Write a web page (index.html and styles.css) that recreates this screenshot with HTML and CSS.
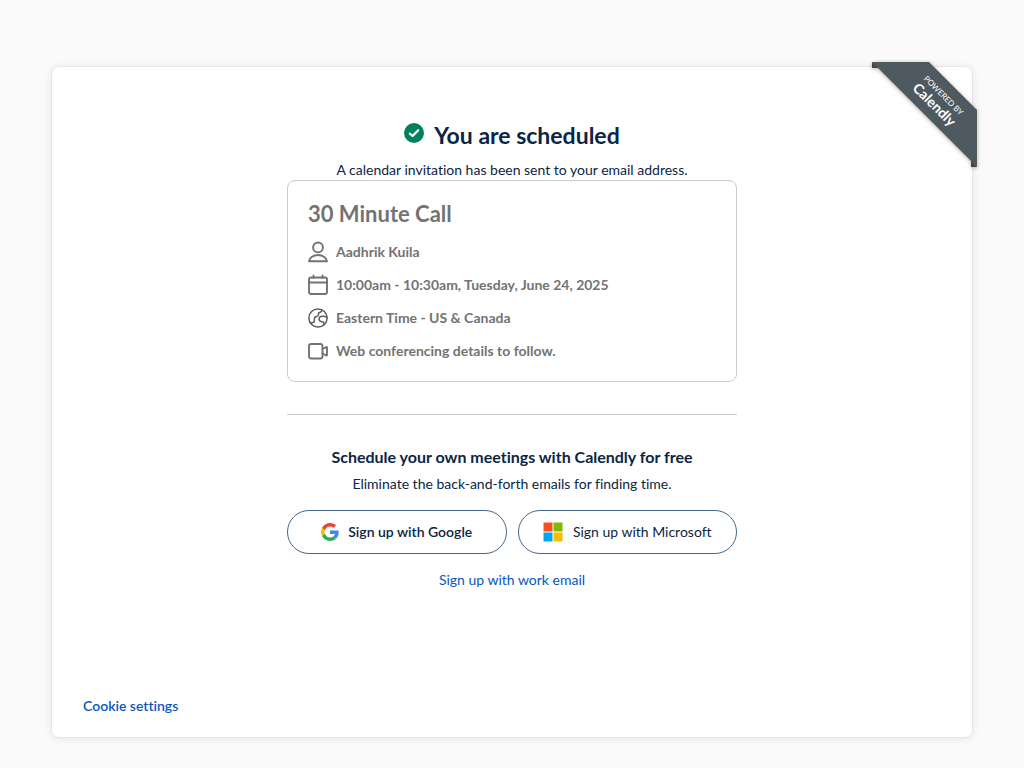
FILE: index.html
```html
<!DOCTYPE html>
<html lang="en">
<head>
<meta charset="utf-8">
<meta name="viewport" content="width=device-width, initial-scale=1">
<title>You are scheduled</title>
<link rel="stylesheet" href="styles.css">
</head>
<body>
<main class="card">
  <a class="ribbon" href="#">
    <svg class="ribbon-shape" viewBox="0 0 105 105" aria-hidden="true">
      <path class="ribbon-fold" d="M0 0V6H8ZM105 105H99V97Z"/>
      <path class="ribbon-band" d="M0 0H57L105 48V105Z"/>
    </svg>
    <span class="ribbon-text"><span class="ribbon-small">POWERED BY</span><span class="ribbon-name">Calendly</span></span>
  </a>

  <div class="content">
    <h1 class="title">
      <svg class="check" viewBox="0 0 20 20" aria-hidden="true"><circle cx="10" cy="10" r="10" fill="#00805f"/><path d="M5.8 10.6 8.6 13 14.2 7.2" fill="none" stroke="#fff" stroke-width="2.2" stroke-linecap="round" stroke-linejoin="round"/></svg>
      <span>You are scheduled</span>
    </h1>
    <p class="text">A calendar invitation has been sent to your email address.</p>

    <section class="event">
      <h2 class="event-title">30 Minute Call</h2>
      <ul class="details">
        <li class="detail">
          <svg class="icon" viewBox="0 0 20 20" aria-hidden="true"><circle cx="10" cy="5.4" r="4.9"/><path d="M1 19.2C1.6 15.6 5.4 13 10 13s8.400 2.600 9 6.200Z"/></svg>
          <span>Aadhrik Kuila</span>
        </li>
        <li class="detail">
          <svg class="icon" viewBox="0 0 20 20" aria-hidden="true"><rect x="1" y="2.500" width="18" height="16.500" rx="2"/><path d="M1 7.500H19M5.500 .5V3M14.500 .5V3"/></svg>
          <span>10:00am - 10:30am, Tuesday, June 24, 2025</span>
        </li>
        <li class="detail">
          <svg class="icon globe" viewBox="0 0 20 20" aria-hidden="true"><circle cx="10" cy="10" r="9.100"/><path d="M2 14.700H4.300C5.600 14.700 6.400 13.800 6.400 12.600V10.800C6.400 9.500 7.300 8.600 8.600 8.500 9.800 8.400 10.500 7.600 10.400 6.500 10.300 5.300 11 4.500 12.100 4.300 13.200 4 13.900 3.200 13.900 1.900M19 9.200C17.800 8.500 16.500 8.200 15 8.200H14.300C12.500 8.200 11.100 9.400 11.100 11.100S12.500 13.800 14.200 13.800C15.300 13.800 15.800 14.400 15.800 15.400V16.900"/></svg>
          <span>Eastern Time - US &amp; Canada</span>
        </li>
        <li class="detail">
          <svg class="icon" viewBox="0 0 20 20" aria-hidden="true"><rect x="1" y="3" width="13.500" height="14.500" rx="2"/><path d="M14.500 8 18.200 6.100Q19 5.800 19 6.700V13.800Q19 14.700 18.200 14.400L14.500 12.500"/></svg>
          <span>Web conferencing details to follow.</span>
        </li>
      </ul>
    </section>

    <hr class="divider">

    <h2 class="promo-title">Schedule your own meetings with Calendly for free</h2>
    <p class="text">Eliminate the back-and-forth emails for finding time.</p>
    <div class="actions">
      <button class="signup signup-google" type="button">
        <svg class="google" viewBox="0 0 48 48" aria-hidden="true"><path fill="#ea4335" d="M24 9.500c3.540 0 6.710 1.220 9.210 3.600l6.850-6.850C35.900 2.380 30.470 0 24 0 14.620 0 6.510 5.380 2.560 13.220l7.980 6.190C12.430 13.720 17.740 9.500 24 9.500z"/><path fill="#4285f4" d="M46.980 24.550c0-1.570-.15-3.090-.38-4.550H24v9.020h12.940c-.58 2.960-2.260 5.480-4.780 7.180l7.730 6c4.510-4.180 7.090-10.360 7.090-17.650z"/><path fill="#fbbc05" d="M10.530 28.590c-.48-1.450-.76-2.990-.76-4.590s.27-3.140.76-4.590l-7.980-6.190C.92 16.460 0 20.120 0 24c0 3.880.92 7.540 2.560 10.780l7.970-6.190z"/><path fill="#34a853" d="M24 48c6.480 0 11.930-2.130 15.890-5.810l-7.730-6c-2.150 1.450-4.920 2.300-8.160 2.300-6.260 0-11.570-4.220-13.470-9.910l-7.980 6.190C6.510 42.620 14.620 48 24 48z"/></svg>
        <span>Sign up with Google</span>
      </button>
      <button class="signup" type="button">
        <svg class="microsoft" viewBox="0 0 20 20" aria-hidden="true"><path fill="#f4511e" d="M.5.500h9v9h-9z"/><path fill="#7fba00" d="M10.500.500h9v9h-9z"/><path fill="#00a4ef" d="M.5 10.500h9v9h-9z"/><path fill="#ffb900" d="M10.500 10.500h9v9h-9z"/></svg>
        <span>Sign up with Microsoft</span>
      </button>
    </div>
    <a class="link" href="#">Sign up with work email</a>
  </div>

  <footer class="footer"><a class="link cookie" href="#">Cookie settings</a></footer>
</main>
</body>
</html>
```
FILE: styles.css
```css
* {
  box-sizing: border-box;
}

body {
  display: flex;
  min-height: 100vh;
  margin: 0;
  padding: 66px 51px 30px;
  background: #fafafa;
  color: #0b2545;
  font-family: Lato, "Open Sans", sans-serif;
  font-size: 14px;
  font-variant-ligatures: none;
  line-height: 20px;
}

h1, h2, p, ul {
  margin: 0;
  padding: 0;
}

.card {
  position: relative;
  display: flex;
  flex: 1;
  flex-direction: column;
  border: 1px solid #e6e6e6;
  border-radius: 8px;
  background: #fff;
  box-shadow: 0 1px 8px rgba(0, 0, 0, 0.08);
}

.content {
  display: flex;
  flex: 1;
  flex-direction: column;
  align-items: center;
  width: 100%;
  max-width: 450px;
  margin: 0 auto;
  padding-top: 53px;
}

.title {
  display: flex;
  align-items: center;
  gap: 10px;
  margin-bottom: 10px;
  font-size: 23px;
  line-height: 30px;
}

.check {
  width: 20px;
  height: 20px;
  margin-bottom: 4px;
}

.event {
  width: 100%;
  padding: 20px;
  border: 1px solid #ccc;
  border-radius: 8px;
  color: #737373;
}

.event-title {
  margin-bottom: 15px;
  font-size: 22px;
  line-height: 26px;
}

.details {
  display: grid;
  gap: 13px;
  list-style: none;
  font-weight: 700;
}

.detail {
  display: flex;
  gap: 8px;
}

.icon {
  width: 20px;
  height: 20px;
  overflow: visible;
  fill: none;
  stroke: #737373;
  stroke-width: 1.9;
  stroke-linecap: round;
  stroke-linejoin: round;
}

.globe {
  stroke: #5c5f63;
  stroke-width: 1.5;
}

.divider {
  width: 100%;
  margin: 32px 0;
  border: 0;
  border-top: 1px solid #ccc;
}

.promo-title {
  margin-bottom: 7px;
  font-size: 16px;
  line-height: 20px;
}

.actions {
  display: grid;
  grid-template-columns: 1fr 1fr;
  gap: 11px;
  width: 100%;
  margin: 16px 0;
}

.signup {
  display: flex;
  align-items: center;
  justify-content: center;
  gap: 10px;
  min-height: 44px;
  padding: 0 12px;
  border: 1px solid #476788;
  border-radius: 22px;
  background: #fff;
  color: inherit;
  font: inherit;
}

.signup-google {
  gap: 9px;
  font-weight: 600;
}

.google {
  width: 18px;
  height: 18px;
}

.microsoft {
  width: 20px;
  height: 20px;
}

.link {
  color: #0a56bd;
  text-decoration: none;
}

.footer {
  padding: 0 31px 21px;
}

.cookie {
  font-weight: 600;
}

.ribbon {
  position: absolute;
  top: -5px;
  right: -5px;
  width: 105px;
  height: 105px;
  color: #fff;
  text-decoration: none;
}

.ribbon-shape {
  display: block;
  filter: drop-shadow(0 1px 2px rgba(0, 0, 0, 0.3));
}

.ribbon-band {
  fill: #4f5960;
}

.ribbon-fold {
  fill: #3e474d;
}

.ribbon-text {
  position: absolute;
  top: 27px;
  left: 16px;
  display: flex;
  flex-direction: column;
  align-items: center;
  width: 100px;
  transform: rotate(45deg);
}

.ribbon-small {
  font-size: 8px;
  line-height: 9px;
}

.ribbon-name {
  font-size: 14px;
  font-weight: 700;
  line-height: 15px;
}
```
